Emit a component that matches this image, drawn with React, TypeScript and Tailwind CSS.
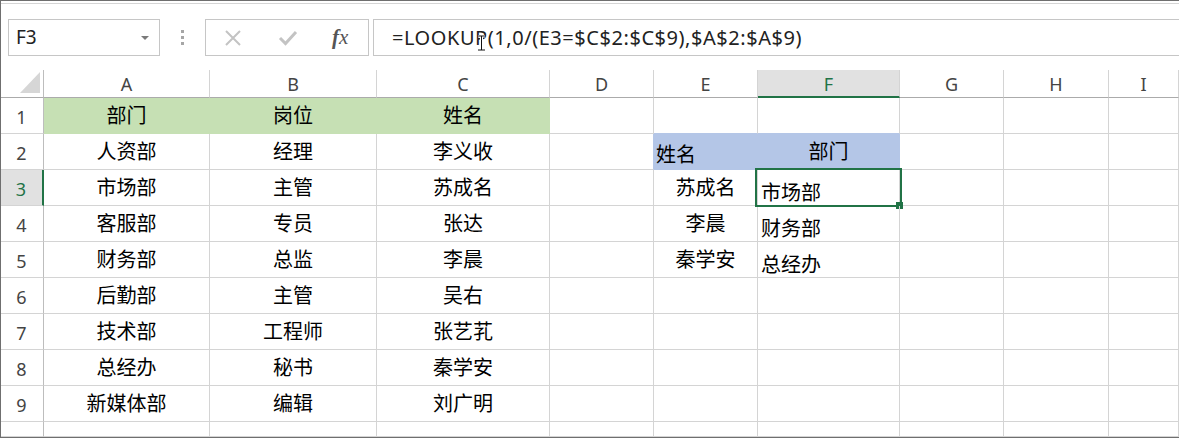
import React from 'react';

const FONT = "font-['Noto_Sans','Noto_Sans_CJK_SC',sans-serif]";

const cols = ['A', 'B', 'C', 'D', 'E', 'F', 'G', 'H', 'I'];

const table = [
  ['部门', '岗位', '姓名'],
  ['人资部', '经理', '李义收'],
  ['市场部', '主管', '苏成名'],
  ['客服部', '专员', '张达'],
  ['财务部', '总监', '李晨'],
  ['后勤部', '主管', '吴右'],
  ['技术部', '工程师', '张艺芤'],
  ['总经办', '秘书', '秦学安'],
  ['新媒体部', '编辑', '刘广明'],
];

const lookup: Record<number, [string, string]> = {
  2: ['姓名', '部门'],
  3: ['苏成名', '市场部'],
  4: ['李晨', '财务部'],
  5: ['秦学安', '总经办'],
};

const FormulaBar: React.FC = () => (
  <div className="mt-[2px] border-t border-[#d5d5d5] h-[67px] shrink-0">
    <div className="mt-[15px] flex items-stretch h-[37px]">
      <div className="ml-[7px] w-[152px] border border-[#c6c6c6] flex items-center justify-between pl-[7px] pr-[10px]">
        <span className="text-[19px] text-[#222] leading-none">F3</span>
        <span className="w-0 h-0 border-l-[4px] border-r-[4px] border-t-[4px] border-l-transparent border-r-transparent border-t-[#7a7a7a] mt-[1px]" />
      </div>
      <div className="w-[45px] flex flex-col items-center justify-center gap-[3px]">
        <span className="w-[3px] h-[3px] bg-[#a6a6a6]" />
        <span className="w-[3px] h-[3px] bg-[#a6a6a6]" />
        <span className="w-[3px] h-[3px] bg-[#a6a6a6]" />
      </div>
      <div className="w-[164px] border border-[#c6c6c6] flex items-center pl-[18px] gap-[36px]">
        <svg width="18" height="16" viewBox="0 0 18 16" className="shrink-0">
          <path d="M2 1 L16 15 M16 1 L2 15" stroke="#c3c3c3" strokeWidth="2" fill="none" />
        </svg>
        <svg width="20" height="16" viewBox="0 0 20 16" className="shrink-0">
          <path d="M2 8 L7.5 13.5 L18 2" stroke="#c3c3c3" strokeWidth="3" fill="none" />
        </svg>
        <span className="font-['Liberation_Serif',serif] italic text-[21px] text-[#555] leading-none -ml-[2px]">
          <span className="font-semibold">f</span>x
        </span>
      </div>
      <div className="ml-[4px] flex-1 border border-r-0 border-[#c6c6c6] flex items-center pl-[18px] relative">
        <span className="text-[20px] text-[#222] leading-none tracking-[0.55px]">=LOOKUP(1,0/(E3=$C$2:$C$9),$A$2:$A$9)</span>
        <svg width="9" height="16" viewBox="0 0 9 16" className="absolute left-[103px] top-[15px]">
          <path d="M1 1 H8 M4.5 1 V15 M1 15 H8" stroke="#fff" strokeWidth="3" fill="none" />
          <path d="M1 1 H8 M4.5 1 V15 M1 15 H8" stroke="#111" strokeWidth="1" fill="none" />
        </svg>
      </div>
    </div>
  </div>
);

const App: React.FC = () => {
  return (
    <div className={`w-[1179px] h-[438px] bg-white overflow-hidden border-l border-t border-b border-[#6f6f6f] flex flex-col ${FONT}`}>
      <FormulaBar />
      <div className="flex-1 grid grid-cols-[43px_166px_167px_173px_104px_104px_142px_104px_105px_1fr] grid-rows-[28px_repeat(9,36px)_1fr]">
        {/* header row */}
        <div className="border-r border-b border-r-[#bdbdbd] border-b-[#ababab] flex items-end justify-end pr-[3px] pb-[4px]">
          <svg width="20" height="21" viewBox="0 0 20 21">
            <path d="M20 0 L20 21 L0 21 Z" fill="#d6d6d6" />
          </svg>
        </div>
        {cols.map((c) => {
          const active = c === 'F';
          return (
            <div
              key={c}
              className={
                active
                  ? 'bg-[#e1e1e1] border-r border-r-[#d4d4d4] border-b-2 border-b-[#217346] flex items-center justify-center text-[18px] text-[#217346]'
                  : 'border-r border-r-[#d4d4d4] border-b border-b-[#ababab] flex items-center justify-center text-[18px] text-[#444]'
              }
            >
              <span className="leading-none pt-[1px]">{c}</span>
            </div>
          );
        })}

        {/* body rows */}
        {Array.from({ length: 10 }, (_, i) => i + 1).map((r) => {
          const data = table[r - 1];
          const lk = lookup[r];
          const rowActive = r === 3;
          return (
            <React.Fragment key={r}>
              <div
                className={
                  rowActive
                    ? 'bg-[#e1e1e1] border-r-2 border-r-[#217346] border-b border-b-[#d4d4d4] flex items-center justify-center text-[18px] text-[#217346]'
                    : 'border-r border-r-[#bdbdbd] border-b border-b-[#d4d4d4] flex items-center justify-center text-[18px] text-[#444]'
                }
              >
                {r <= 9 && <span className="leading-none pt-[2px] pr-[1px]">{r}</span>}
              </div>
              {cols.map((c, ci) => {
                let text = '';
                let cls = 'border-r border-b border-[#d4d4d4] flex items-center justify-center';
                if (data && ci < 3) {
                  text = data[ci];
                  if (r === 1) cls = 'bg-[#c6e0b4] border-r border-b border-[#c6e0b4] flex items-center justify-center';
                }
                if (r === 1 && (c === 'E' || c === 'F')) {
                  cls = 'border-r border-b border-r-[#d4d4d4] border-b-[#b4c6e7]';
                }
                if (r === 2 && c === 'D') {
                  cls = 'border-r border-b border-r-[#b4c6e7] border-b-[#d4d4d4]';
                }
                if (lk && c === 'E') {
                  text = lk[0];
                  cls =
                    r === 2
                      ? 'bg-[#b4c6e7] border-r border-b border-[#b4c6e7] flex items-end justify-start pl-[2px] pb-[2px]'
                      : 'border-r border-b border-[#d4d4d4] flex items-center justify-center pt-[1px]';
                }
                if (lk && c === 'F') {
                  text = lk[1];
                  cls =
                    r === 2
                      ? 'bg-[#b4c6e7] border-r border-b border-[#b4c6e7] flex items-center justify-center'
                      : 'relative border-r border-b border-[#d4d4d4] flex items-end justify-start pl-[3px] pb-0';
                }
                return (
                  <div key={c} className={`${cls} text-[20px] text-black leading-none`}>
                    {text && <span className="leading-[24px]">{text}</span>}
                    {r === 3 && c === 'F' && (
                      <>
                        <span className="absolute -left-[3px] -top-[2px] w-[147px] h-[39px] border-2 border-[#217346] pointer-events-none" />
                        <span className="absolute left-[138px] top-[32px] w-[7px] h-[7px] bg-[#217346]" />
                      </>
                    )}
                  </div>
                );
              })}
            </React.Fragment>
          );
        })}
      </div>
    </div>
  );
};

export default App;
